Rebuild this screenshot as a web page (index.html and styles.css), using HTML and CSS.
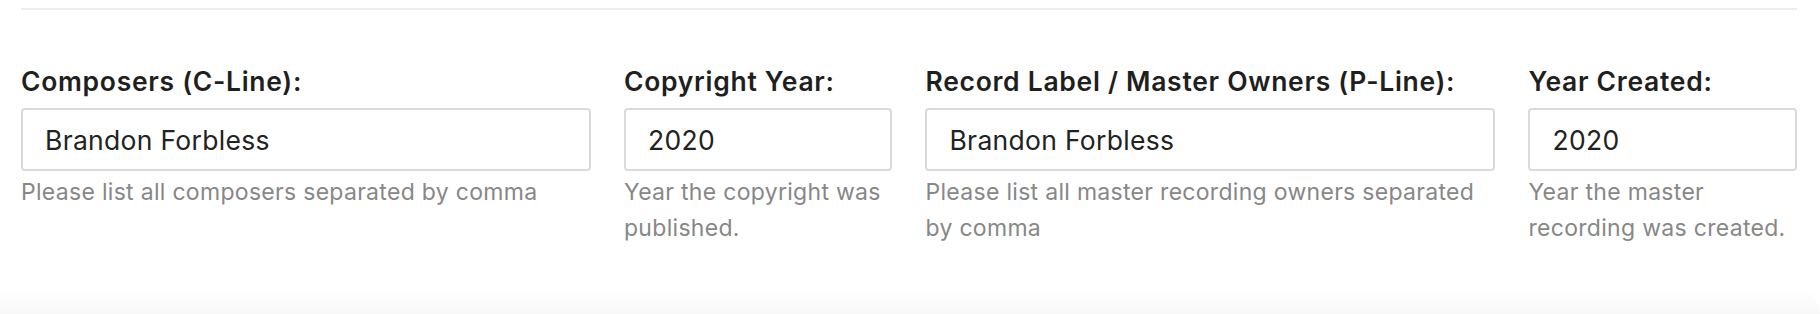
FILE: index.html
```html
<!DOCTYPE html>
<html lang="en">
<head>
<meta charset="utf-8">
<title>Credits</title>
<link rel="stylesheet" href="styles.css">
</head>
<body>
<div class="page">
  <div class="rule"></div>
  <div class="row">
    <div class="field wide">
      <label class="label">Composers (C-Line):</label>
      <input class="input" type="text" value="Brandon Forbless">
      <p class="help">Please list all composers separated by comma</p>
    </div>
    <div class="field narrow">
      <label class="label">Copyright Year:</label>
      <input class="input" type="text" value="2020">
      <p class="help">Year the copyright was published.</p>
    </div>
    <div class="field wide">
      <label class="label">Record Label / Master Owners (P-Line):</label>
      <input class="input" type="text" value="Brandon Forbless">
      <p class="help">Please list all master recording owners separated by comma</p>
    </div>
    <div class="field narrow">
      <label class="label">Year Created:</label>
      <input class="input" type="text" value="2020">
      <p class="help">Year the master recording was created.</p>
    </div>
  </div>
</div>
<div class="shade"></div>
</body>
</html>
```

FILE: styles.css
```css
html, body {
  margin: 0;
  padding: 0;
  background: #ffffff;
}
body {
  width: 1820px;
  height: 314px;
  overflow: hidden;
  position: relative;
  font-family: Inter, "Liberation Sans", sans-serif;
  color: #222222;
}
.page {
  margin: 0 23px 0 21px;
  padding-top: 8px;
}
.rule {
  height: 2px;
  background: #ededed;
}
.row {
  display: flex;
  margin: 56px -16.5px 0;
}
.field {
  box-sizing: border-box;
  padding: 0 16.5px;
  display: flex;
  flex-direction: column;
}
.wide { flex: 0 0 33.3333%; }
.narrow { flex: 0 0 16.6667%; }
.label {
  font-size: 26.5px;
  line-height: 30px;
  font-weight: 600;
  letter-spacing: 0.7px;
  color: #1f1f1f;
  white-space: nowrap;
  margin-bottom: 12px;
}
.input {
  box-sizing: border-box;
  height: 63px;
  width: 100%;
  border: 2px solid #dadada;
  border-radius: 4px;
  padding: 0 22px;
  font-family: Inter, "Liberation Sans", sans-serif;
  font-size: 26.5px;
  letter-spacing: 0.3px;
  color: #222222;
  background: #ffffff;
  outline: none;
}
.help {
  margin: 3px 0 0;
  font-size: 23px;
  line-height: 36px;
  letter-spacing: 0.3px;
  color: #878787;
}
.shade {
  position: absolute;
  left: 0;
  right: 0;
  bottom: 0;
  height: 26px;
  background: linear-gradient(#ffffff, #f8f8f8);
  border-top-right-radius: 40px;
}
```
